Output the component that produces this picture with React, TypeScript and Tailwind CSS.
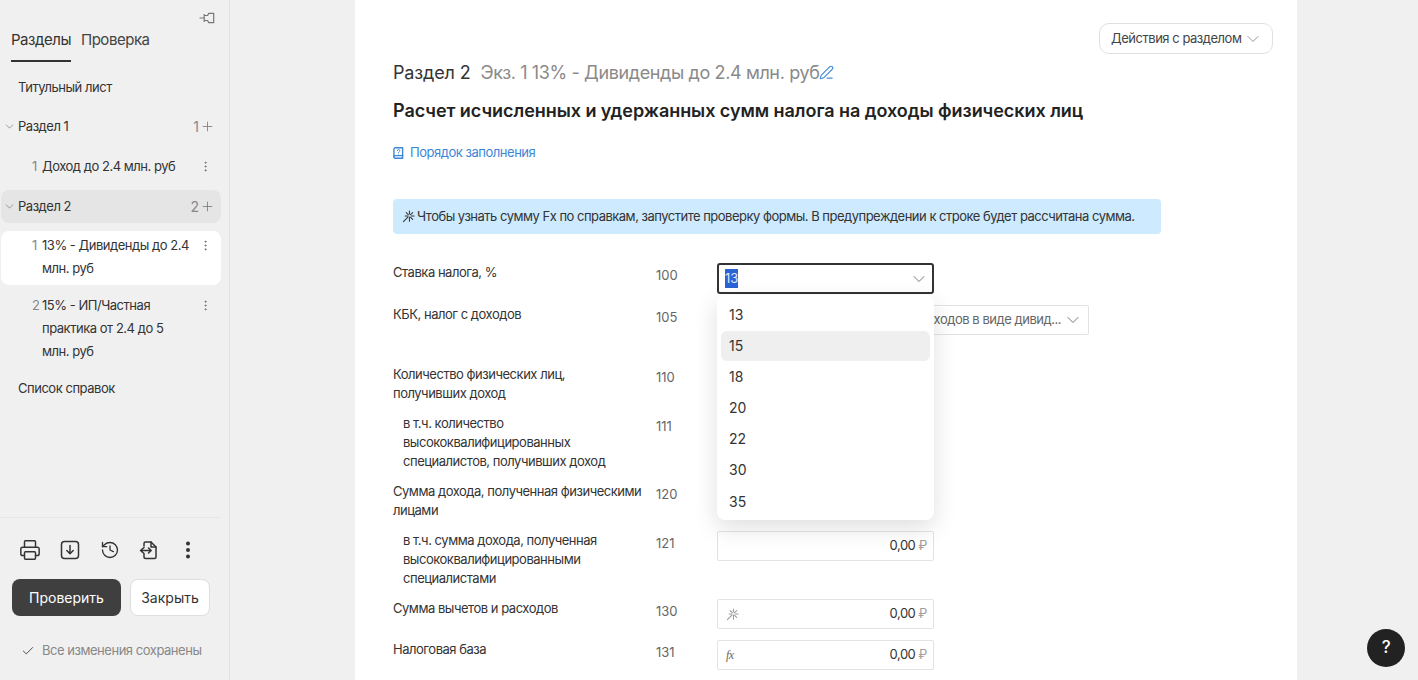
import React from "react";
import { ChevronDown, Plus, EllipsisVertical, Check, Printer, History, PenLine } from "lucide-react";

const Spark = ({ className = "" }: { className?: string }) => (
  <svg viewBox="0 0 14 14" className={className} fill="none" stroke="currentColor" strokeWidth="1.1" strokeLinecap="round">
    <path d="M8 1v3.2M8 7.6V12M13 6.5H9.8M6.5 6.5H3.4M4.5 2.8l2.3 2.3M11.5 2.8 9.2 5.1M11.5 10.2 9.2 7.9M6.4 7.6 1.5 12.5" />
  </svg>
);

const PinIcon = () => (
  <svg viewBox="0 0 16 12" className="w-[16px] h-[12px] text-[#777]" fill="none" stroke="currentColor" strokeWidth="1.2" strokeLinejoin="round">
    <path d="M0.5 6H5.2M5.2 2v8M5.2 3.5h3.4l1.2-2.2h4.9v9.4H9.8L8.6 8.5H5.2" />
  </svg>
);

const BookIcon = () => (
  <svg viewBox="0 0 12 13" className="w-[11px] h-[12px] text-[#3d86d6] shrink-0" fill="none" stroke="currentColor" strokeWidth="1.5" strokeLinecap="round" strokeLinejoin="round">
    <path d="M2.5 0.8h8v8.6h-8A1.5 1.5 0 0 0 1 10.9V2.3A1.5 1.5 0 0 1 2.5 0.8Z" />
    <path d="M1 10.9a1.3 1.3 0 0 0 1.5 1.3h8v-2.8" />
    <path d="M4.8 3.9a1.3 1.3 0 1 1 1.8 1.2c-.4.2-.6.4-.6.9M6 7.5v.1" strokeWidth="1" />
  </svg>
);

const Ruble = () => <span className="text-[#a0a0a0] ml-[3px] text-[13px]">₽</span>;

function MoneyField({ icon }: { icon?: React.ReactNode }) {
  return (
    <div className="w-[217px] h-[30px] border border-[#e3e3e3] rounded-[2px] bg-white flex items-center pl-2 pr-[6px] text-[13px] text-[#333]">
      <span className="w-4 flex items-center text-[#9a9a9a]">{icon}</span>
      <span className="ml-auto">0,00</span>
      <Ruble />
    </div>
  );
}

function Row({ label, code, h, indent, children }: { label: React.ReactNode; code: string; h: string; indent?: boolean; children?: React.ReactNode }) {
  return (
    <div className={`flex items-start ${h}`}>
      <div className={`w-[263px] shrink-0 text-[13px] leading-[19px] text-[#333] pr-[14px] ${indent ? "pl-[10px]" : ""}`}>{label}</div>
      <div className="w-[61px] shrink-0 text-[13px] leading-[19px] tracking-normal pt-[3px] text-[#666]">{code}</div>
      {children}
    </div>
  );
}

function SideHead({ title, n, active }: { title: string; n: string; active?: boolean }) {
  return (
    <div className={`flex items-center h-[33px] ml-px pl-[2px] pr-[6px] rounded-lg ${active ? "bg-[#e5e5e5]" : ""}`}>
      <ChevronDown size={13} className="text-[#777] shrink-0" strokeWidth={1.3} />
      <span className="ml-[2px] text-[13px] text-[#333]">{title}</span>
      <span className="ml-auto text-[14px] tracking-normal text-[#888]">{n}</span>
      <Plus size={15} className="ml-[1px] text-[#777]" strokeWidth={1.3} />
    </div>
  );
}

function SideItem({ n, lines, active }: { n: string; lines: string[]; active?: boolean }) {
  return (
    <div className={`flex ml-px pl-[31px] pr-[9px] pt-[3px] pb-[5px] rounded-lg ${active ? "bg-white" : ""}`}>
      <span className="w-[10px] shrink-0 text-[13px] leading-[23px] text-[#888]">{n}</span>
      <div className="flex-1 text-[13px] leading-[23px] text-[#333]">
        {lines.map((l, i) => (
          <div key={i} className="whitespace-nowrap">{l}</div>
        ))}
      </div>
      <EllipsisVertical size={13} className="mt-[5px] text-[#666] shrink-0" strokeWidth={1.6} />
    </div>
  );
}

export default function App() {
  return (
    <div className="h-[680px] w-[1418px] overflow-hidden flex bg-[#f0f0f0] tracking-[-0.47px] font-['Inter','Liberation_Sans',sans-serif]">
      <aside className="w-[230px] shrink-0 border-r border-[#e2e2e2] flex flex-col relative">
        <div className="h-[62px] pl-[11px] pr-[14px] pt-[12px] relative">
          <div className="flex justify-end h-[14px]">
            <PinIcon />
          </div>
          <div className="flex gap-[10px] mt-[5px] text-[15px] leading-[18px]">
            <div className="text-[#333] h-[31px] border-b-2 border-[#333]">Разделы</div>
            <div className="text-[#444]">Проверка</div>
          </div>
        </div>
        <div className="w-[221px] flex-1 flex flex-col">
          <div className="pl-[18px] mt-[15px] text-[13px] leading-[20px] text-[#333]">Титульный лист</div>
          <div className="mt-[13px]"><SideHead title="Раздел 1" n="1" /></div>
          <div className="mt-[9px]"><SideItem n="1" lines={["Доход до 2.4 млн. руб"]} /></div>
          <div className="mt-[7px]"><SideHead title="Раздел 2" n="2" active /></div>
          <div className="mt-[8px]"><SideItem n="1" lines={["13% - Дивиденды до 2.4", "млн. руб"]} active /></div>
          <div className="mt-[6px]"><SideItem n="2" lines={["15% - ИП/Частная", "практика от 2.4 до 5", "млн. руб"]} /></div>
          <div className="pl-[18px] mt-[10px] text-[13px] leading-[20px] text-[#333]">Список справок</div>
        </div>
        <div className="w-[221px] h-[163px] border-t border-[#e6e6e6] shrink-0">
          <div className="flex items-center h-[24px] mt-[20px] pl-[19px] text-[#333]">
            <Printer size={22} strokeWidth={1.6} />
            <svg viewBox="0 0 20 20" className="w-[20px] h-[20px] ml-[19px]" fill="none" stroke="currentColor" strokeWidth="1.5" strokeLinecap="round" strokeLinejoin="round">
              <rect x="1.5" y="1.5" width="17" height="17" rx="3" />
              <path d="M10 5.5v8M6.8 10.5 10 13.7l3.2-3.2" />
            </svg>
            <History size={20} className="ml-[20px]" strokeWidth={1.6} />
            <svg viewBox="0 0 20 20" className="w-[20px] h-[20px] ml-[19px]" fill="none" stroke="currentColor" strokeWidth="1.5" strokeLinecap="round" strokeLinejoin="round">
              <path d="M5 6V3.5A1.5 1.5 0 0 1 6.5 2H12l5 5v10a1.5 1.5 0 0 1-1.5 1.5h-9A1.5 1.5 0 0 1 5 17v-2.5" />
              <path d="M12 2v5h5M1.5 10.5H12M9.5 8l2.7 2.5-2.7 2.5M5 7.5l-3.5 3 3.5 3" />
            </svg>
            <EllipsisVertical size={22} className="ml-[18px]" strokeWidth={2.4} />
          </div>
          <div className="flex items-start mt-[17px] pl-[12px] gap-[9px] text-[14px] tracking-normal">
            <button className="w-[109px] h-[37px] rounded-lg bg-[#3f3f3f] text-white">Проверить</button>
            <button className="w-[80px] h-[37px] rounded-lg bg-white border border-[#dedede] text-[#333]">Закрыть</button>
          </div>
          <div className="flex items-center mt-[25px] pl-[21px] text-[13px] text-[#888]">
            <Check size={14} className="text-[#444]" strokeWidth={1.6} />
            <span className="ml-[7px] whitespace-nowrap">Все изменения сохранены</span>
          </div>
        </div>
      </aside>

      <main className="flex-1 relative pl-[125px]">
        <div className="w-[942px] h-[680px] bg-white pl-[38px] pr-[24px] relative overflow-hidden">
          <div className="flex justify-end pt-[23px]">
            <button className="w-[174px] h-[31px] border border-[#e0e0e0] rounded-[10px] flex items-center pl-[11px] text-[13px] text-[#444]">
              Действия с разделом
              <ChevronDown size={20} className="ml-[2px] text-[#999]" strokeWidth={1.2} />
            </button>
          </div>
          <div className="flex items-center mt-[6px] h-[24px] text-[18px] tracking-[-0.38px] whitespace-nowrap">
            <span className="text-[#333] tracking-[-0.15px]">Раздел 2</span>
            <span className="ml-[10px] text-[#8a8a8a]">Экз. 1 13% - Дивиденды до 2.4 млн. руб</span>
            <PenLine size={15} className="text-[#4a90d9]" strokeWidth={1.8} />
          </div>
          <div className="mt-[16px] h-[22px] text-[18px] leading-[22px] tracking-[-0.05px] font-semibold text-[#222] whitespace-nowrap">
            Расчет исчисленных и удержанных сумм налога на доходы физических лиц
          </div>
          <div className="flex items-center mt-[21px] h-[20px] text-[13px] text-[#3d86d6]">
            <BookIcon />
            <span className="ml-[6px]">Порядок заполнения</span>
          </div>
          <div className="mt-[36px] w-[768px] h-[35px] bg-[#cdeafe] rounded-[4px] flex items-center pl-[9px] text-[13px] tracking-[-0.5px] text-[#333] whitespace-nowrap">
            <Spark className="w-[13px] h-[13px] mr-[2px] shrink-0 text-[#333]" />
            Чтобы узнать сумму Fx по справкам, запустите проверку формы. В предупреждении к строке будет рассчитана сумма.
          </div>

          <div className="mt-[29px] relative">
            <Row label="Ставка налога, %" code="100" h="h-[42px]">
              <div className="w-[217px] h-[31px] border-2 border-[#333] rounded-[3px] bg-white flex items-center pl-[6px] pr-[3px] text-[13px] text-[#333]">
                <span className="bg-[#2b62d4] text-[#dde6fa] leading-[19px] tracking-normal">13</span>
                <ChevronDown size={20} className="ml-auto text-[#777]" strokeWidth={1.2} />
              </div>
            </Row>
            <Row label="КБК, налог с доходов" code="105" h="h-[60px]">
              <div className="w-[372px] h-[30px] border border-[#e3e3e3] rounded-[2px] bg-white flex items-center pr-[5px] text-[13px] text-[#666]">
                <span className="flex-1 text-right whitespace-nowrap overflow-hidden">НДФЛ с доходов в виде дивид...</span>
                <ChevronDown size={20} className="ml-[2px] text-[#777]" strokeWidth={1.2} />
              </div>
            </Row>
            <Row label={<>Количество физических лиц,<br />получивших доход</>} code="110" h="h-[49px]" />
            <Row label="в т.ч. количество высококвалифицированных специалистов, получивших доход" code="111" h="h-[68px]" indent />
            <Row label="Сумма дохода, полученная физическими лицами" code="120" h="h-[49px]" />
            <Row label="в т.ч. сумма дохода, полученная высококвалифицированными специалистами" code="121" h="h-[68px]" indent>
              <MoneyField />
            </Row>
            <Row label="Сумма вычетов и расходов" code="130" h="h-[41px]">
              <MoneyField icon={<Spark className="w-[13px] h-[13px]" />} />
            </Row>
            <Row label="Налоговая база" code="131" h="h-[41px]">
              <MoneyField icon={<span className="text-[12px] italic text-[#666] font-['Liberation_Serif',serif]">fx</span>} />
            </Row>

            <div className="absolute left-[324px] top-[32px] w-[217px] h-[225px] bg-white rounded-lg shadow-[0_8px_24px_rgba(0,0,0,0.13)] px-[4px] pt-[5px] text-[14px] tracking-normal text-[#333]">
              {["13", "15", "18", "20", "22", "30", "35"].map((v) => (
                <div key={v} className={`h-[30px] mb-[1.1px] pb-[1px] rounded-md flex items-center pl-[8px] ${v === "15" ? "bg-[#efefef]" : ""}`}>{v}</div>
              ))}
            </div>
          </div>
        </div>
        <button className="absolute right-[13px] top-[629px] w-[38px] h-[38px] rounded-full bg-[#222] text-white text-[17px] font-medium flex items-center justify-center">?</button>
      </main>
    </div>
  );
}
